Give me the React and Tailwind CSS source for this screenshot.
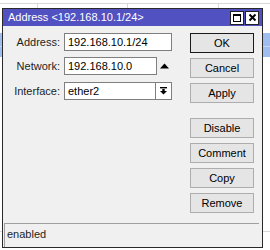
import React from "react";

function Btn({ children, def, className = "" }) {
  return (
    <div
      className={`h-[20px] w-[64px] flex items-center justify-center bg-[#e5e5e5] ${def ? "border border-[#1a1a1a]" : "border border-[#adadad]"} ${className}`}
    >
      {children}
    </div>
  );
}

export default function App() {
  return (
    <div
      className="relative w-[270px] h-[250px] bg-white overflow-hidden text-[11px] text-black"
      style={{ fontFamily: '"Liberation Sans", Arial, sans-serif' }}
    >
      {/* background table */}
      <div className="h-[3px]" />
      <div className="h-px bg-[#d8d8d8]" />
      <div className="flex h-[4px]">
        <div className="w-[37px]" />
        <div className="w-px bg-[#d8d8d8]" />
        <div className="w-[89px]" />
        <div className="w-px bg-[#d8d8d8]" />
        <div className="w-[90px]" />
        <div className="w-px bg-[#d8d8d8]" />
      </div>
      <div className="h-[25px]" />
      <div className="h-[13px] bg-[#9fbdee]" />
      <div className="h-px bg-[#c7d8f5]" />
      <div className="h-[10px] bg-[#9fbdee]" />
      <div className="h-[174px]" />
      <div className="h-px bg-[#d8d8d8]" />

      {/* window */}
      <div className="absolute left-[2px] top-[8px] w-[261px] h-[240px] border border-[#2a2a2a] bg-[#f0f0f0] flex flex-col">
        <div className="h-[17px] bg-[#5151c2] flex items-center justify-between pl-[5px] pr-[3px] text-white">
          <span className="leading-none">Address &lt;192.168.10.1/24&gt;</span>
          <div className="flex gap-[1px]">
            <div className="w-[14px] h-[14px] bg-white border border-[#222] flex items-center justify-center">
              <div className="w-[8px] h-[8px] border border-black border-t-2" />
            </div>
            <div className="w-[14px] h-[14px] bg-white border border-[#222] flex items-center justify-center">
              <svg width="9" height="9" viewBox="0 0 9 9">
                <path d="M1.5 1.5 L7.5 7.5 M7.5 1.5 L1.5 7.5" stroke="black" strokeWidth="1.9" />
              </svg>
            </div>
          </div>
        </div>

        <div className="flex flex-1 pt-[7px]">
          {/* form */}
          <div className="flex flex-col w-[187px]">
            <div className="flex items-center h-[18px]">
              <span className="w-[61px] text-right pr-[4px] text-[#1e1e1e]">Address:</span>
              <div className="w-[108px] h-[18px] bg-white border border-[#7f7f7f] flex items-center pl-[3px]">192.168.10.1/24</div>
            </div>
            <div className="flex items-center h-[18px] mt-[6px]">
              <span className="w-[61px] text-right pr-[4px] text-[#1e1e1e]">Network:</span>
              <div className="w-[93px] h-[18px] bg-white border border-[#7f7f7f] flex items-center pl-[3px]">192.168.10.0</div>
              <div className="w-[15px] flex items-center justify-center">
                <svg width="9" height="6" viewBox="0 0 9 6">
                  <path d="M0 5.5 L4.5 0.5 L9 5.5 Z" fill="black" />
                </svg>
              </div>
            </div>
            <div className="flex items-center h-[18px] mt-[7px]">
              <span className="w-[61px] text-right pr-[4px] text-[#1e1e1e]">Interface:</span>
              <div className="w-[92px] h-[18px] bg-white border border-[#7f7f7f] flex items-center pl-[3px]">ether2</div>
              <div className="w-[16px] h-[18px] bg-white border border-[#7f7f7f] border-l-0 flex items-center justify-center">
                <svg width="7" height="8" viewBox="0 0 7 8">
                  <rect x="0" y="0" width="7" height="1.4" fill="black" />
                  <rect x="2.3" y="2" width="2.4" height="2" fill="black" />
                  <path d="M0 4 L7 4 L3.5 7.6 Z" fill="black" />
                </svg>
              </div>
            </div>
          </div>

          {/* buttons */}
          <div className="flex flex-col gap-[5px]">
            <Btn def>OK</Btn>
            <Btn>Cancel</Btn>
            <Btn>Apply</Btn>
            <Btn className="mt-[10px]">Disable</Btn>
            <Btn>Comment</Btn>
            <Btn>Copy</Btn>
            <Btn>Remove</Btn>
          </div>
        </div>

        <div className="h-[24px] ml-[1px] mr-[3px] pb-[3px] border-t border-l border-[#a0a0a0] flex items-center pl-[2px] text-[#1e1e1e]">
          enabled
        </div>
      </div>
    </div>
  );
}
